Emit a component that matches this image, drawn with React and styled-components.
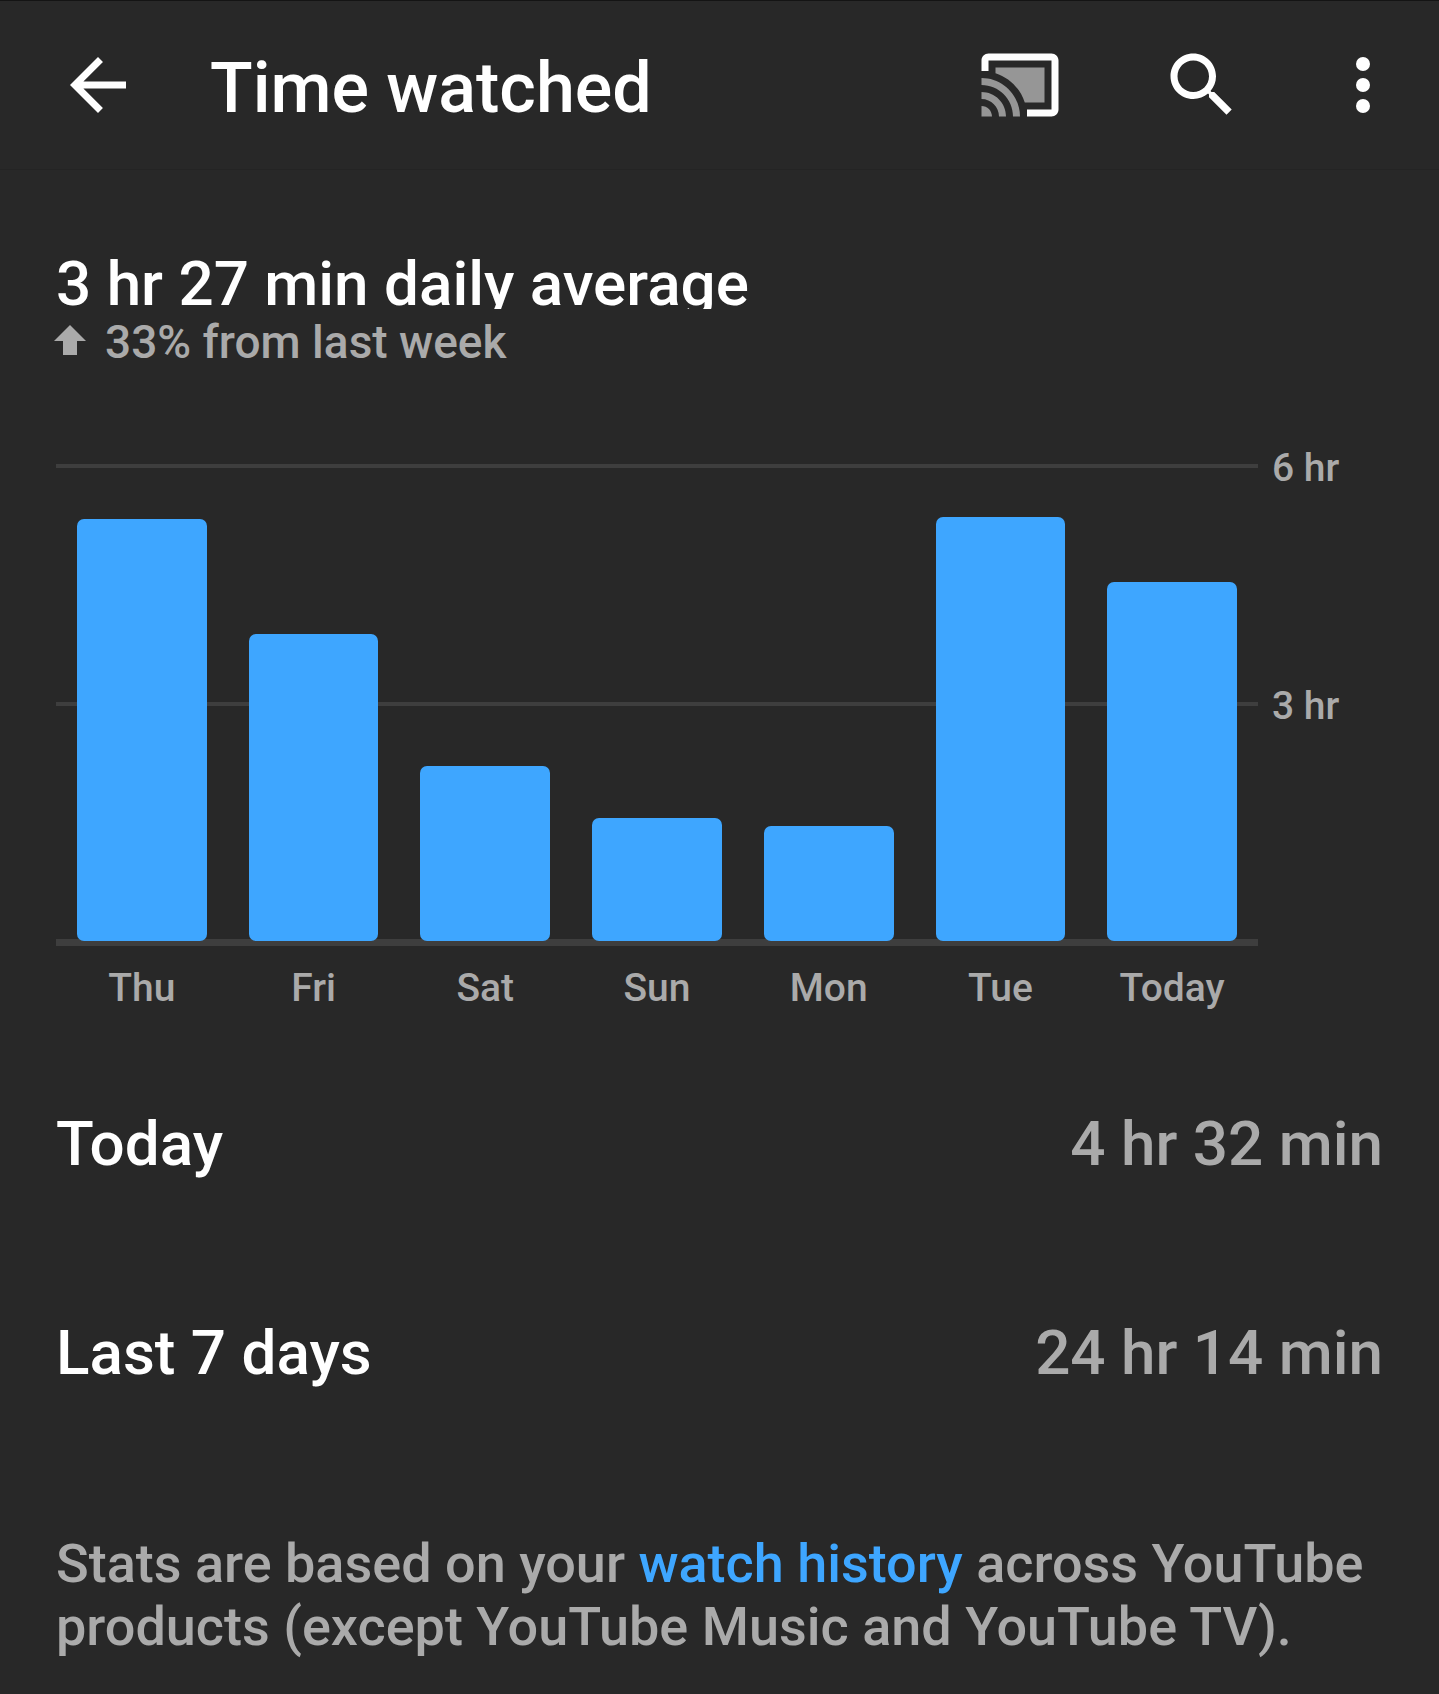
import React from "react";
import styled, { createGlobalStyle } from "styled-components";

const GlobalStyle = createGlobalStyle`
    *{
        box-sizing:border-box;
    }
    body{
        margin:0;
        background-color:#282828;
        color:#fff;
        font-family:Roboto, "Liberation Sans", sans-serif;
        font-weight:500;
    }
`;

const Header = styled.header`
    display:flex;
    align-items:center;
    height:170px;
    padding:0 55px 0 56px;
    border-top:1px solid #141414;
    border-bottom:1px solid #242424;
`;

const IconButton = styled.button`
    display:flex;
    flex:none;
    padding:0;
    border:0;
    background:none;
    color:inherit;
    cursor:pointer;
`;

const Title = styled.h1`
    flex:1;
    margin:0 0 0 70px;
    padding-top:6px;
    font-size:70px;
    font-weight:500;
    line-height:82px;
`;

const Actions = styled.div`
    display:flex;
    align-items:center;
    gap:98px;
`;

const Main = styled.main`
    padding:83px 56px 0;
`;

const Average = styled.h2`
    height:56px;
    margin:0;
    overflow:hidden;
    font-size:62px;
    font-weight:500;
    line-height:62px;
`;

const Change = styled.p`
    display:flex;
    align-items:center;
    gap:21px;
    margin:6px 0 0;
    color:#aaa;
    font-size:46px;
    line-height:54px;

    svg{
        overflow:visible;
    }
`;

const Chart = styled.section`
    display:grid;
    grid-template-columns:1fr 125px;
    margin-top:95px;
`;

const Plot = styled.div`
    display:grid;
`;

const Lines = styled.div`
    grid-area:1 / 1;
    display:grid;
    grid-template-rows:238px 237px 7px;
`;

const Line = styled.div`
    height:${props=>props.$thick ? "7px" : "4px"};
    background-color:#3e3e3e;
`;

const Bars = styled.div`
    grid-area:1 / 1;
    display:grid;
    grid-template-columns:repeat(7, 1fr);
    align-items:end;
    height:475px;
    margin-top:2px;
`;

const Bar = styled.div`
    height:${props=>props.$percent}%;
    margin:0 21px;
    border-radius:7px;
    background-color:#3ea6ff;
`;

/* pulled up so that each label is centred on its line */
const Scale = styled.div`
    display:grid;
    grid-template-rows:238px 237px;
    margin-top:-19px;
    padding-left:14px;
`;

const Label = styled.span`
    color:#aaa;
    font-size:39px;
    line-height:46px;
    white-space:nowrap;
`;

const Days = styled.div`
    display:grid;
    grid-template-columns:repeat(7, 1fr);
    margin-top:19px;
    text-align:center;
`;

const Totals = styled.dl`
    margin:28px 0 0;
`;

const Row = styled.div`
    display:flex;
    justify-content:space-between;
    align-items:center;
    height:209px;
    font-size:62px;
    line-height:74px;
`;

const Name = styled.dt``;

const Value = styled.dd`
    margin:0;
    color:#aaa;
`;

const Note = styled.p`
    margin:75px 0 0;
    color:#aaa;
    font-size:54px;
    line-height:63px;
`;

const Link = styled.a`
    color:#3ea6ff;
    text-decoration:none;
`;

const MAX_MINUTES = 360;

const week = [
    {day:"Thu",minutes:320},
    {day:"Fri",minutes:233},
    {day:"Sat",minutes:133},
    {day:"Sun",minutes:93},
    {day:"Mon",minutes:87},
    {day:"Tue",minutes:321},
    {day:"Today",minutes:272}
];

const totals = [
    {name:"Today",value:"4 hr 32 min"},
    {name:"Last 7 days",value:"24 hr 14 min"}
];

const BackIcon = ()=>
    <svg width="84" height="84" viewBox="0 0 24 24" fill="currentColor" aria-hidden="true">
        <path d="M20 11H7.83l5.59-5.59L12 4l-8 8 8 8 1.41-1.41L7.83 13H20v-2z"/>
    </svg>

const CastIcon = ()=>
    <svg width="84" height="84" viewBox="0 0 24 24" fill="currentColor" aria-hidden="true">
        <path d="M21 3H3c-1.1 0-2 .9-2 2v3h2V5h18v14h-7v2h7c1.1 0 2-.9 2-2V5c0-1.100-.9-2-2-2z"/>
        <path fill="#969696" d="M1 18v3h3c0-1.660-1.340-3-3-3zm0-4v2c2.760 0 5 2.240 5 5h2c0-3.870-3.130-7-7-7zm0-4v2c4.970 0 9 4.030 9 9h2c0-6.080-4.930-11-11-11zM5 7v1.630c3.960 1.280 7.090 4.410 8.370 8.370H19V7z"/>
    </svg>

const SearchIcon = ()=>
    <svg width="84" height="84" viewBox="0 0 24 24" fill="currentColor" aria-hidden="true">
        <path d="M15.500 14h-.79l-.28-.27C15.410 12.590 16 11.110 16 9.500 16 5.910 13.090 3 9.500 3S3 5.910 3 9.500 5.910 16 9.500 16c1.610 0 3.090-.59 4.230-1.570l.27.28v.79l5 4.990L20.490 19l-4.990-5zm-6 0C7.010 14 5 11.990 5 9.500S7.010 5 9.500 5 14 7.010 14 9.500 11.990 14 9.500 14z"/>
    </svg>

const MoreIcon = ()=>
    <svg width="42" height="84" viewBox="6 0 12 24" fill="currentColor" aria-hidden="true">
        <circle cx="12" cy="6" r="2"/>
        <circle cx="12" cy="12" r="2"/>
        <circle cx="12" cy="18" r="2"/>
    </svg>

const UpIcon = ()=>
    <svg width="28" height="34" viewBox="0 0 28 34" fill="currentColor" aria-hidden="true">
        <path d="M14 0L30 16H21V30H7V16H-2z"/>
    </svg>

const App = ()=>
    <>
        <GlobalStyle/>
        <Header>
            <IconButton aria-label="Back"><BackIcon/></IconButton>
            <Title>Time watched</Title>
            <Actions>
                <IconButton aria-label="Cast"><CastIcon/></IconButton>
                <IconButton aria-label="Search"><SearchIcon/></IconButton>
                <IconButton aria-label="More options"><MoreIcon/></IconButton>
            </Actions>
        </Header>
        <Main>
            <Average>3 hr 27 min daily average</Average>
            <Change><UpIcon/>33% from last week</Change>
            <Chart>
                <Plot>
                    <Lines>
                        <Line/>
                        <Line/>
                        <Line $thick/>
                    </Lines>
                    <Bars>
                        {week.map(({day,minutes})=>
                            <Bar key={day} $percent={minutes / MAX_MINUTES * 100}/>
                        )}
                    </Bars>
                </Plot>
                <Scale>
                    <Label>6 hr</Label>
                    <Label>3 hr</Label>
                </Scale>
                <Days>
                    {week.map(({day})=><Label key={day}>{day}</Label>)}
                </Days>
            </Chart>
            <Totals>
                {totals.map(({name,value})=>
                    <Row key={name}>
                        <Name>{name}</Name>
                        <Value>{value}</Value>
                    </Row>
                )}
            </Totals>
            <Note>
                Stats are based on your <Link href="#history">watch history</Link> across YouTube products (except YouTube Music and YouTube TV).
            </Note>
        </Main>
    </>

export default App
